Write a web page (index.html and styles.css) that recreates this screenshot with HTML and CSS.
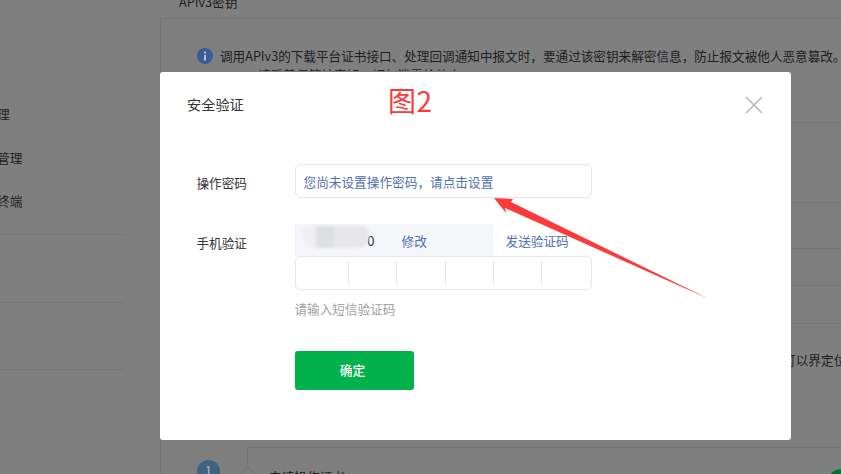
FILE: index.html
```html
<!DOCTYPE html>
<html lang="zh-CN">
<head>
<meta charset="utf-8">
<title>安全验证</title>
<link rel="stylesheet" href="styles.css">
</head>
<body>
<div class="page">
  <aside class="sidebar">
    <nav class="nav">
      <div class="nav-item nav-item-short">理</div>
      <div class="nav-item">管理</div>
      <div class="nav-item">终端</div>
    </nav>
    <div class="side-rule side-rule-a"></div>
    <div class="side-rule side-rule-b"></div>
    <div class="side-rule side-rule-b2"></div>
  </aside>
  <main class="main">
    <div class="main-head"><span class="main-title">APIv3密钥</span></div>
    <div class="panel">
      <section class="row row-info">
        <div class="notice">
          <svg class="info-icon" viewBox="0 0 16 16" aria-hidden="true">
            <circle cx="8" cy="8" r="8" fill="#3a5b93"/>
            <rect x="7.1" y="7" width="1.8" height="5.6" fill="#c6ccd8"/>
            <rect x="7.1" y="3.6" width="1.8" height="1.9" fill="#c6ccd8"/>
          </svg>
          <p class="notice-text">调用APIv3的下载平台证书接口、处理回调通知中报文时，要通过该密钥来解密信息，防止报文被他人恶意篡改。</p>
        </div>
        <p class="notice-second">请妥善保管该密钥，切勿泄露给他人。</p>
      </section>
      <section class="row row-h80"></section>
      <section class="row row-h46"></section>
      <section class="row row-h37"></section>
      <section class="row row-h38"></section>
      <section class="row-text"><p class="row-copy">可以界定位</p></section>
      <section class="steps">
        <div class="step-num">1</div>
        <div class="step-card">
          <span class="step-title">申请操作证书</span>
          <span class="step-ok"></span>
        </div>
      </section>
    </div>
  </main>
</div>

<div class="modal" role="dialog" aria-label="安全验证">
  <header class="modal-head">
    <h2 class="modal-title">安全验证</h2>
    <svg class="close" viewBox="0 0 18 18" aria-hidden="true">
      <path d="M1 1 L17 17 M17 1 L1 17" stroke="#b9b9b9" stroke-width="1.6" fill="none"/>
    </svg>
  </header>
  <form class="form">
    <div class="field">
      <label class="label label-first">操作密码</label>
      <div class="control">
        <div class="input-box"><a class="link">您尚未设置操作密码，请点击设置</a></div>
      </div>
    </div>
    <div class="field field-phone">
      <label class="label label-second">手机验证</label>
      <div class="control">
        <div class="phone-row">
          <div class="phone-box">
            <span class="phone-num">0</span>
            <a class="link link-edit">修改</a>
          </div>
          <a class="link link-send">发送验证码</a>
        </div>
        <div class="code-box">
          <span class="code-cell"></span>
          <span class="code-cell"></span>
          <span class="code-cell"></span>
          <span class="code-cell"></span>
          <span class="code-cell"></span>
          <span class="code-cell"></span>
        </div>
        <p class="hint">请输入短信验证码</p>
        <button class="submit" type="button">确定</button>
      </div>
    </div>
  </form>
</div>

<div class="smudge"></div>
<div class="fig-label">图2</div>
<svg class="arrow" viewBox="0 0 841 474" aria-hidden="true">
  <polygon points="494,198 513,199 511,202 709,299 505,208 506,213" fill="#fb3a3a"/>
</svg>
</body>
</html>
```

FILE: styles.css
```css
* { box-sizing: border-box; }

html, body {
  margin: 0;
  width: 841px;
  height: 474px;
  overflow: hidden;
  background: #7f7f7f;
  font-family: "Noto Sans CJK SC", "Liberation Sans", sans-serif;
  font-size: 12.7px;
  color: #1c1c1c;
}

p, h2 { margin: 0; font-weight: 400; }

.page {
  display: flex;
  width: 841px;
  height: 474px;
  overflow: hidden;
}

/* sidebar */
.sidebar {
  flex: 0 0 160px;
  width: 160px;
  padding-top: 93px;
  overflow: hidden;
}

.nav { display: flex; flex-direction: column; gap: 1px; }

.nav-item {
  height: 42.5px;
  line-height: 42.5px;
  margin-left: -3px;
  white-space: nowrap;
  color: #1e1e1e;
}

.side-rule { width: 124px; height: 1px; background: #74777b; }
.side-rule-a { margin-top: 11.5px; }
.side-rule-b { margin-top: 67px; }
.side-rule-b2 { margin-top: 66px; }

/* main */
.main { flex: 1 1 auto; min-width: 0; display: flex; flex-direction: column; }

.main-head { height: 19px; padding-left: 19px; overflow: hidden; }
.main-title { display: block; margin-top: -8px; line-height: 20px; white-space: nowrap; color: #1e1e1e; }

.panel {
  flex: 1 1 auto;
  border-left: 1px solid #74777a;
  border-top: 1px solid #74777a;
  min-height: 0;
}

.row { border-bottom: 1px solid #737676; }

.row-info { height: 104px; padding: 27px 0 0 36px; overflow: hidden; white-space: nowrap; }
.notice { display: flex; align-items: center; gap: 7px; height: 20px; }
.info-icon { width: 16px; height: 16px; flex: none; }
.notice-text { font-size: 12.62px; line-height: 20px; color: #1e1e1e; }
.notice-second {
  height: 3px;
  margin-top: 2px;
  padding-left: 61px;
  overflow: hidden;
  font-size: 12.7px;
  line-height: 14px;
  color: #1e1e1e;
}

.row-h80 { height: 80px; }
.row-h46 { height: 46px; }
.row-h37 { height: 37px; }
.row-h38 { height: 38px; }

.row-text { height: 123px; padding: 26px 0 0 622px; white-space: nowrap; }
.row-copy { line-height: 20px; color: #1e1e1e; }

.steps { display: flex; padding-left: 36px; }

.step-num {
  flex: none;
  width: 23px;
  height: 23px;
  margin-top: 13px;
  border-radius: 50%;
  background: #3f6482;
  color: #a4b4c0;
  text-align: center;
  line-height: 23px;
  font-size: 14px;
}

.step-card {
  position: relative;
  flex: 1 1 auto;
  margin-left: 27px;
  height: 60px;
  padding: 19px 0 0 21px;
  border-left: 1px solid #74777a;
  border-top: 1px solid #74777a;
  display: flex;
  justify-content: space-between;
}

.step-card::before {
  content: "";
  position: absolute;
  left: -6px;
  top: 21px;
  width: 11px;
  height: 11px;
  background: #7f7f7f;
  border-left: 1px solid #74777a;
  border-top: 1px solid #74777a;
  transform: rotate(45deg);
}

.step-title { line-height: 20px; color: #1e1e1e; white-space: nowrap; }

.step-ok {
  width: 26px;
  height: 26px;
  margin: 2px -13px 0 0;
  border-radius: 50%;
  background: #05712f;
}

/* modal */
.modal {
  position: absolute;
  left: 160px;
  top: 72px;
  width: 631px;
  height: 368px;
  background: #fff;
  border-radius: 3px;
}

.modal-head {
  display: flex;
  align-items: center;
  justify-content: space-between;
  height: 64px;
  padding: 0 28px 0 27px;
}

.modal-title { font-size: 14.2px; line-height: 20px; color: #333; }

.close { width: 18px; height: 18px; display: block; margin-top: 2px; }

.form { padding: 28px 0 0 37px; }

.field { display: flex; }
.field-phone { margin-top: 26px; }

.label { flex: 0 0 98px; font-size: 12.6px; color: #333; line-height: 20px; margin-left: -0.5px; }
.label-first { padding-top: 9px; }
.label-second { padding-top: 9px; }

.control { width: 297px; }

.input-box {
  height: 34px;
  padding-left: 8px;
  border: 1px solid #e5e7f0;
  border-radius: 5px;
  line-height: 34px;
}

.link { color: #4f6fb0; font-size: 12.67px; white-space: nowrap; cursor: pointer; }

.phone-row { display: flex; align-items: center; height: 32px; }

.phone-box {
  display: flex;
  align-items: center;
  width: 198px;
  height: 32px;
  padding-left: 9px;
  background: #f5f6fa;
}

.phone-num { width: 71px; text-align: right; color: #333; font-size: 13px; }
.link-edit { margin-left: 27px; }
.link-send { margin-left: 13px; }

.code-box {
  display: grid;
  grid-template-columns: 53px 48px 49px 48px 48px 1fr;
  align-items: center;
  height: 34px;
  border: 1px solid #e5e7f0;
  border-radius: 5px;
}

.code-cell { height: 24px; border-right: 1px solid #e5e7f0; }
.code-cell:last-child { border-right: 0; }

.hint {
  margin-top: 9px;
  line-height: 20px;
  font-size: 12.62px;
  color: #a0a0a0;
}

.submit {
  display: block;
  width: 119px;
  height: 39px;
  margin-top: 32px;
  padding: 0 0 2px;
  border: 0;
  border-radius: 3px;
  background: #00b14c;
  color: #fff;
  font-family: inherit;
  font-size: 12.7px;
  font-weight: 500;
  text-indent: -3px;
}

/* overlays */
.smudge {
  position: absolute;
  left: 302px;
  top: 226px;
  width: 67px;
  height: 22px;
  border-radius: 5px 8px 12px 14px;
  background: linear-gradient(90deg, #f0f0f2 0 20%, #dedfe2 22% 46%, #e7e7ea 50% 100%);
  filter: blur(1.5px);
}

.fig-label {
  position: absolute;
  left: 388px;
  top: 81px;
  font-size: 28px;
  line-height: 38px;
  letter-spacing: 0.5px;
  color: #fb3a3a;
  white-space: nowrap;
}

.arrow {
  position: absolute;
  left: 0;
  top: 0;
  width: 841px;
  height: 474px;
  pointer-events: none;
}
```
